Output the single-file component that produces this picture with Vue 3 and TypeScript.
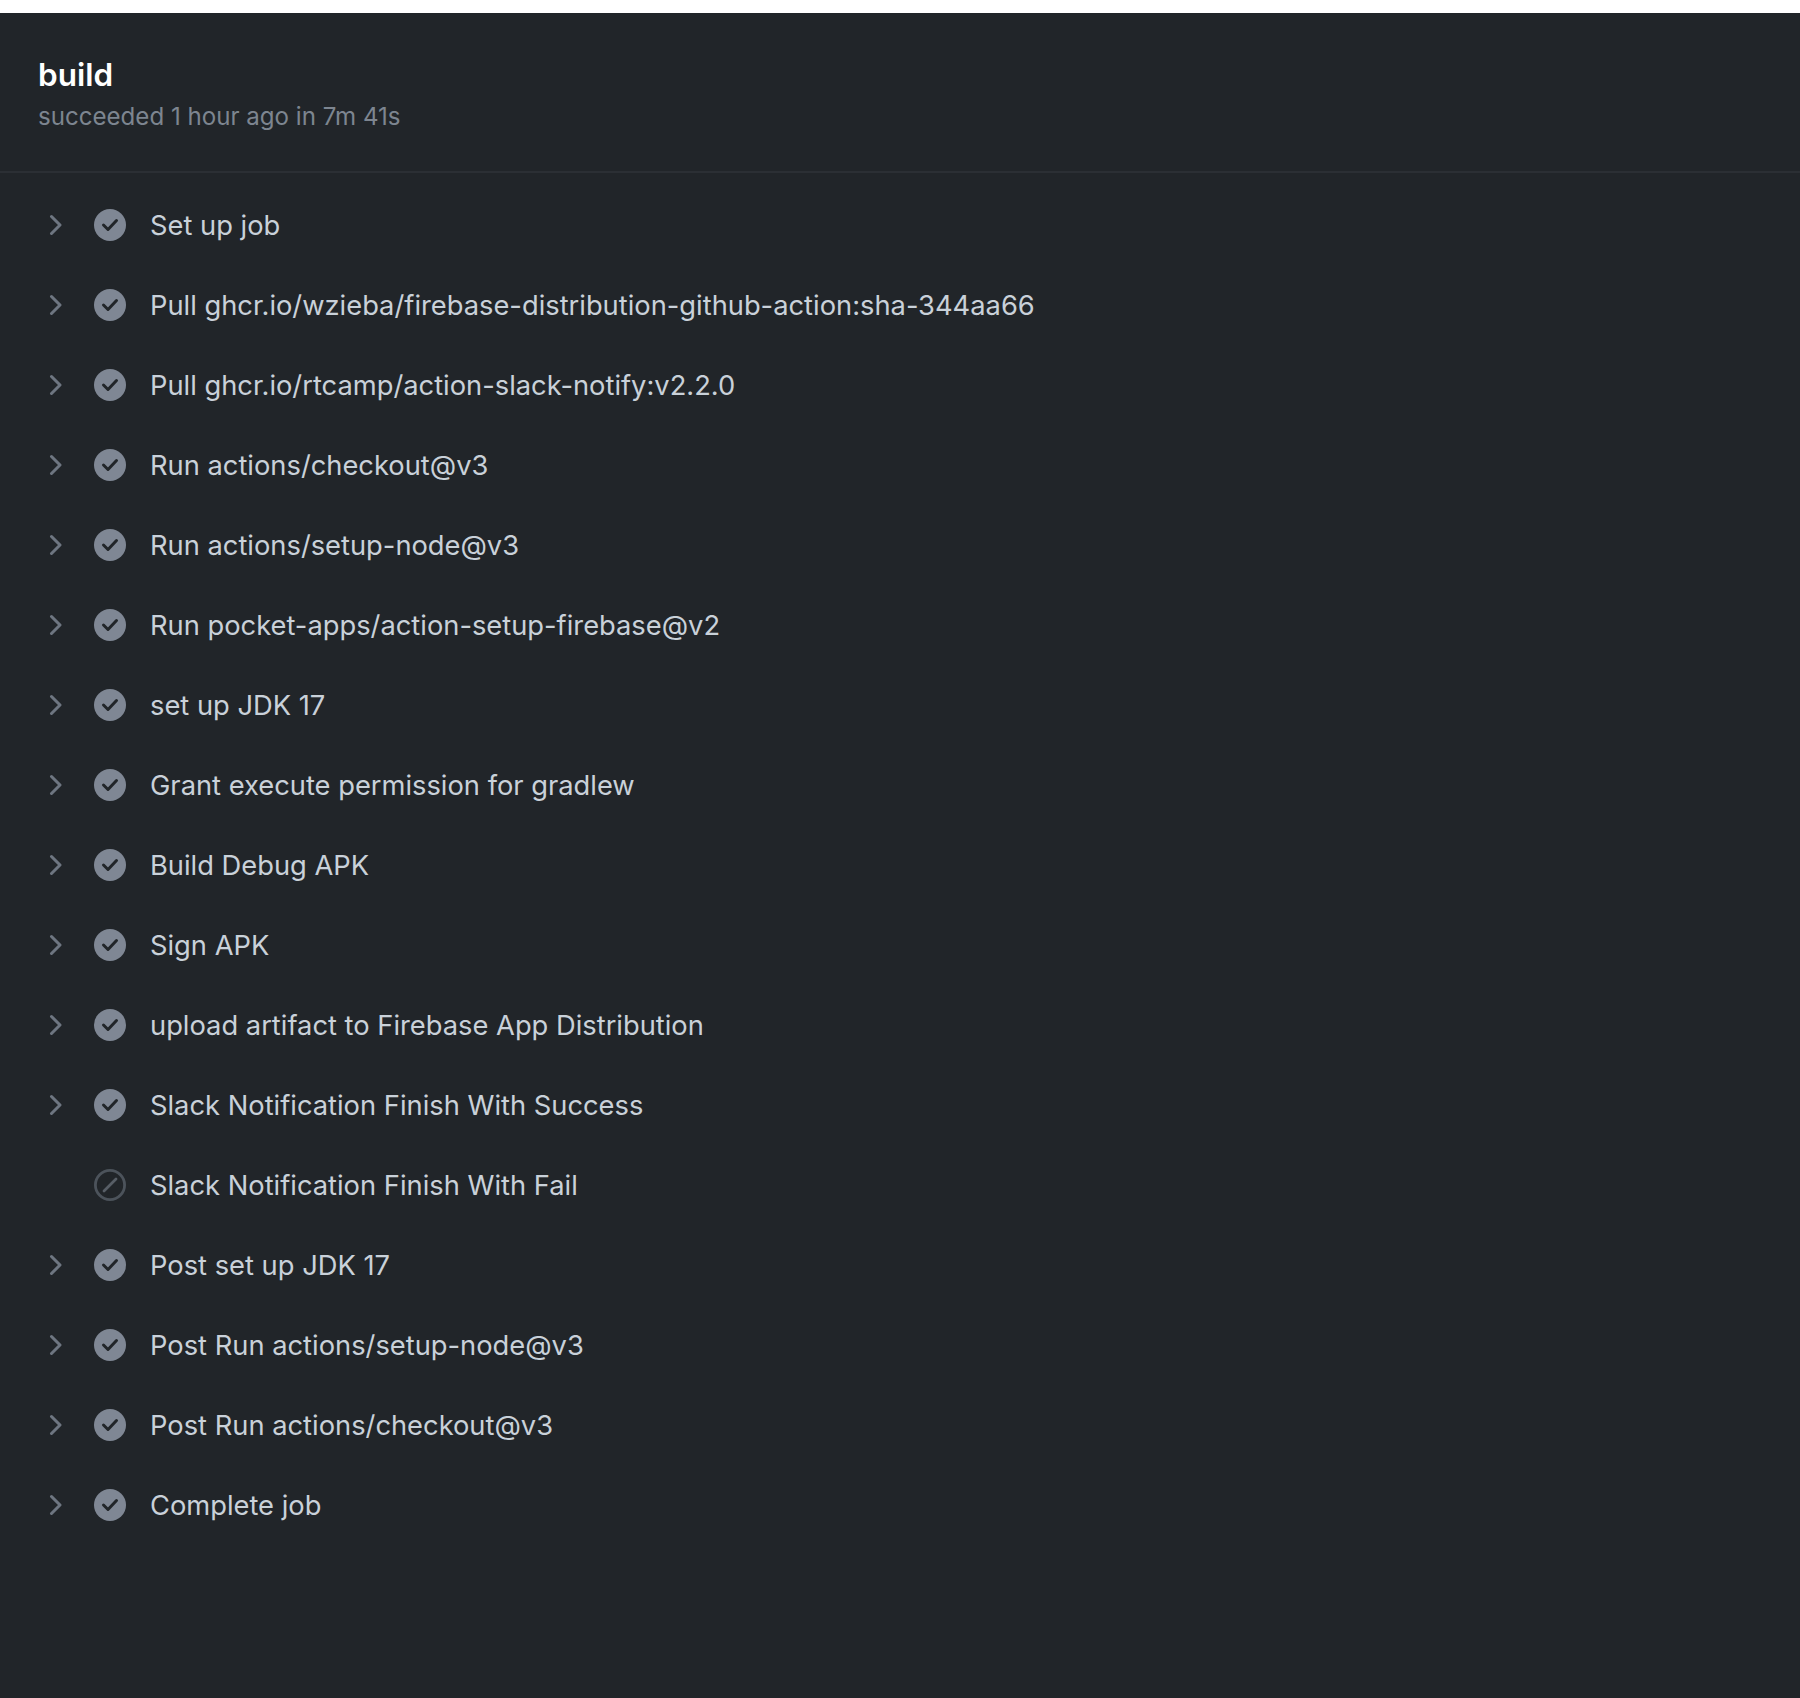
<script setup lang="ts">
interface Step {
  name: string
  skipped?: boolean
}

const steps: Step[] = [
  { name: 'Set up job' },
  { name: 'Pull ghcr.io/wzieba/firebase-distribution-github-action:sha-344aa66' },
  { name: 'Pull ghcr.io/rtcamp/action-slack-notify:v2.2.0' },
  { name: 'Run actions/checkout@v3' },
  { name: 'Run actions/setup-node@v3' },
  { name: 'Run pocket-apps/action-setup-firebase@v2' },
  { name: 'set up JDK 17' },
  { name: 'Grant execute permission for gradlew' },
  { name: 'Build Debug APK' },
  { name: 'Sign APK' },
  { name: 'upload artifact to Firebase App Distribution' },
  { name: 'Slack Notification Finish With Success' },
  { name: 'Slack Notification Finish With Fail', skipped: true },
  { name: 'Post set up JDK 17' },
  { name: 'Post Run actions/setup-node@v3' },
  { name: 'Post Run actions/checkout@v3' },
  { name: 'Complete job' },
]
</script>

<template>
  <div class="page">
    <main class="job">
      <header class="job-header">
        <h1 class="job-title">build</h1>
        <p class="job-meta">succeeded 1 hour ago in 7m 41s</p>
      </header>

      <ul class="steps">
        <li v-for="step in steps" :key="step.name" class="step">
          <span class="chevron-slot">
            <svg v-if="!step.skipped" class="chevron" viewBox="0 0 16 24" aria-hidden="true">
              <path d="M5.5 3.5 L14 12 L5.5 20.5" />
            </svg>
          </span>
          <svg v-if="step.skipped" class="status" viewBox="0 0 32 32" aria-hidden="true">
            <circle class="skip-ring" cx="16" cy="16" r="14.6" />
            <path class="skip-bar" d="M10 22 L22 10" />
          </svg>
          <svg v-else class="status" viewBox="0 0 32 32" aria-hidden="true">
            <circle class="done-disc" cx="16" cy="16" r="16" />
            <path class="done-tick" d="M9.5 16 L14 20.5 L22.5 11.5" />
          </svg>
          <span class="step-name">{{ step.name }}</span>
        </li>
      </ul>
    </main>
  </div>
</template>

<style>
html,
body {
  margin: 0;
  background: #fff;
}
</style>

<style scoped>
.page {
  height: 1698px;
  padding-top: 13px;
  box-sizing: border-box;
  display: flex;
  flex-direction: column;
  font-family: Inter, "Liberation Sans", sans-serif;
}

.job {
  flex: 1;
  background: #212529;
}

.job-header {
  height: 160px;
  padding: 42px 38px 0;
  box-sizing: border-box;
  border-bottom: 2px solid #2b2f34;
}

.job-title {
  margin: 0;
  font-size: 31.5px;
  line-height: 40px;
  font-weight: 600;
  color: #fff;
}

.job-meta {
  margin: 4px 0 0;
  font-size: 24.1px;
  line-height: 36px;
  color: #7d8590;
}

.steps {
  margin: 0;
  padding: 12px 0 0;
  list-style: none;
}

.step {
  height: 80px;
  display: flex;
  align-items: center;
  padding-left: 46px;
}

.chevron-slot {
  width: 48px;
  height: 24px;
  flex: none;
}

.chevron {
  display: block;
  width: 16px;
  height: 24px;
  fill: none;
  stroke: #6e7681;
  stroke-width: 3;
  stroke-linecap: round;
  stroke-linejoin: round;
}

.status {
  width: 32px;
  height: 32px;
  flex: none;
}

.done-disc {
  fill: #7f8794;
}

.done-tick {
  fill: none;
  stroke: #212529;
  stroke-width: 3;
  stroke-linecap: round;
  stroke-linejoin: round;
}

.skip-ring {
  fill: none;
  stroke: #4c535b;
  stroke-width: 2.8;
}

.skip-bar {
  fill: none;
  stroke: #575e66;
  stroke-width: 2.8;
  stroke-linecap: round;
}

.step-name {
  margin-left: 24px;
  padding-top: 1px;
  font-size: 27.3px;
  line-height: 40px;
  color: #c9d1d9;
}
</style>
